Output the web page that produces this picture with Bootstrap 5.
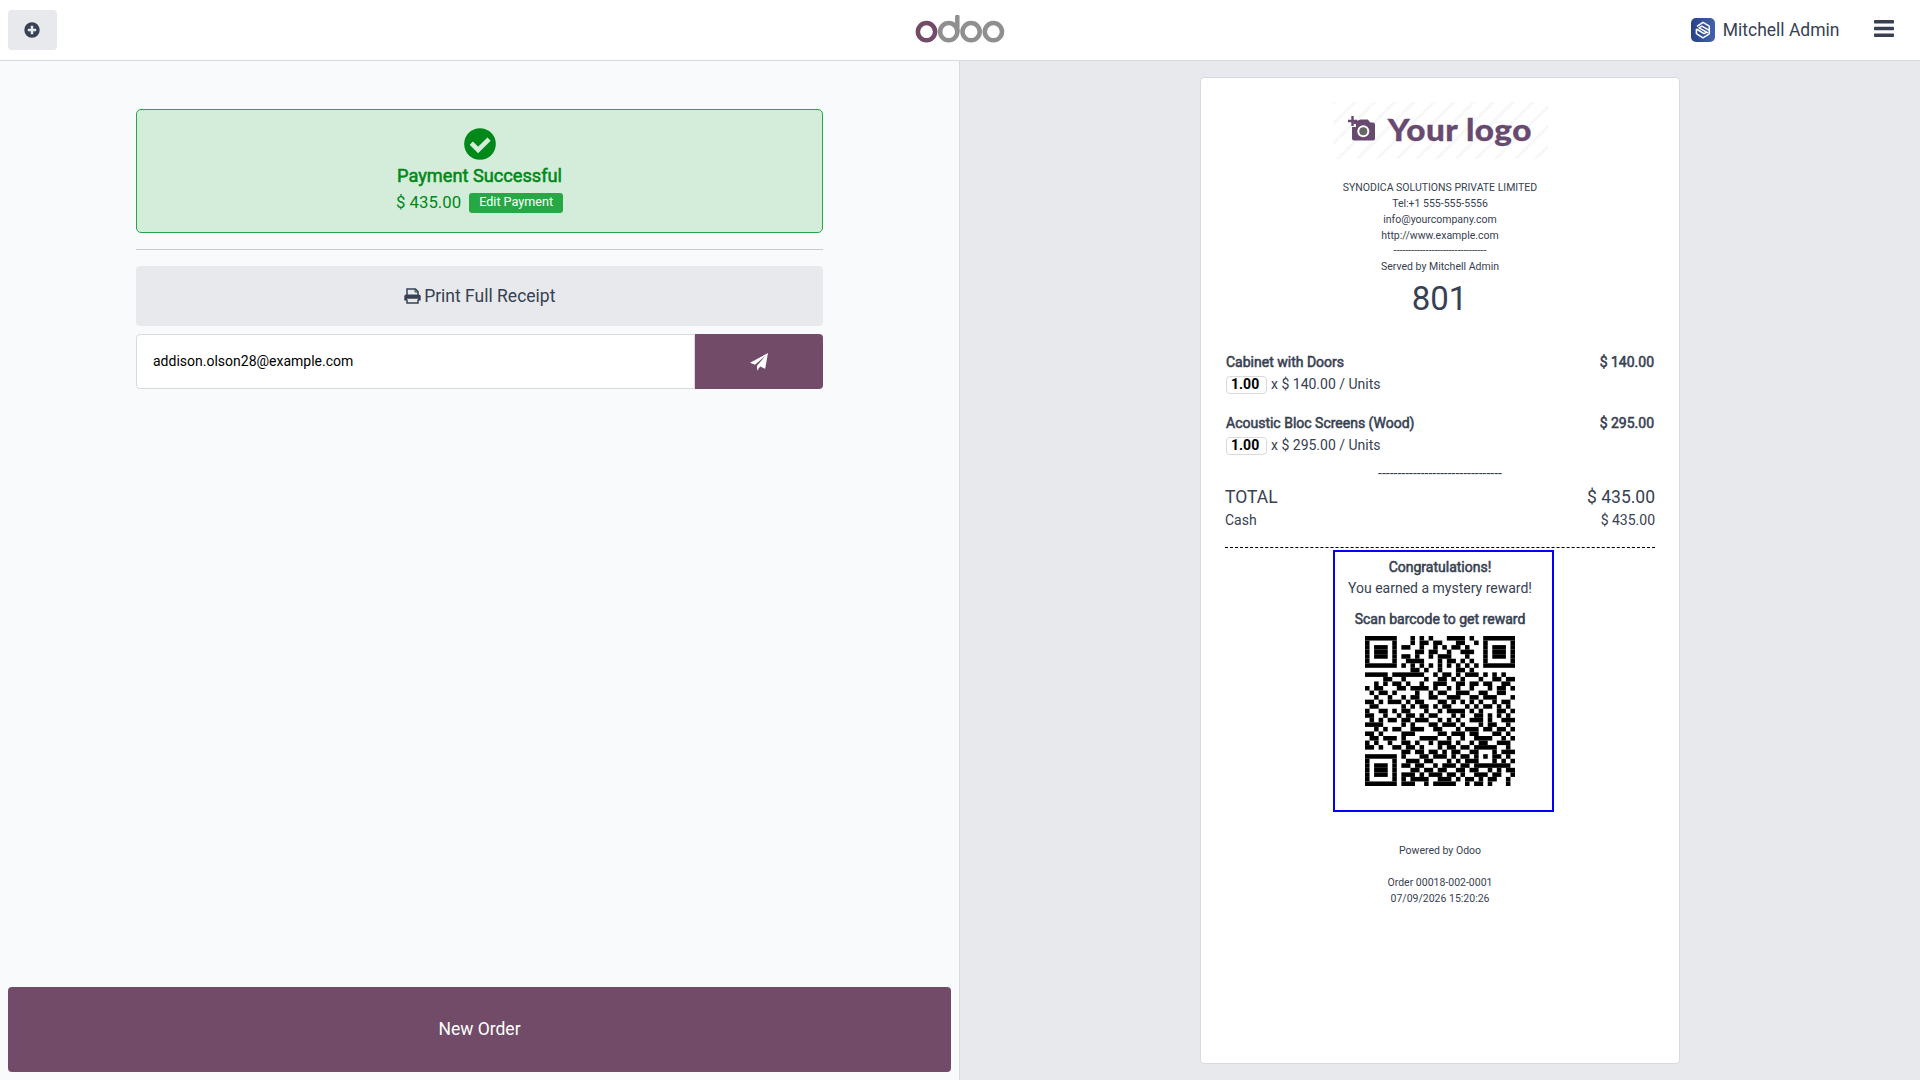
<!DOCTYPE html>
<html lang="en">
<head>
<meta charset="utf-8">
<title>Point of Sale</title>
<link href="https://cdn.jsdelivr.net/npm/bootstrap@5.3.0/dist/css/bootstrap.min.css" rel="stylesheet">
<style>
html,body{height:100%}
body{font-family:Roboto,"Noto Sans",sans-serif;font-size:14px;line-height:21px;color:#374151;background:#f9fafc;overflow:hidden}
.pos-top{height:61px;border-bottom:1px solid #d8dadd;padding:0 20px 0 8px}
.top-side{flex:1 1 0}
.btn-plus{width:49px;height:40px;background:#e7e9ed;border-radius:4px;border:0;padding:0 1px 0 0;line-height:0;display:block}
.brand-logo{margin-left:12px}
.user-name{font-size:17.5px;line-height:26px;margin-left:7.5px}
.burger{margin:0 6px 3px 34.5px}
.left-pane{width:960px;border-right:1px solid #d8dadd;padding:48px 8px 8px}
.actions{width:687px}
.paid-box{height:124px;border:1px solid #28a745;border-radius:5px;background:#d4edda;color:#008818;padding-top:18px}
.paid-title{font-size:18.2px;line-height:27px;margin-top:2px;height:27px}
.paid-sum{font-size:16.8px;line-height:26px;margin-top:1px}
.paid-sum span{line-height:24px;margin-bottom:2px}
.edit-pay{font-size:12.6px;line-height:16px;height:20px;padding:0 10px 2px;border-radius:3px;background:#28a745;color:#fff;border:0}
.split-line{height:1px;background:#c7cacf;margin:16px 0}
.btn-print{height:60px;background:#e7e9ed;border:0;border-radius:4px;font-size:17.5px;color:#374151}
.print-icon{margin-right:3.5px}
.mail-row{height:55px;margin-top:8px}
.mail-row .form-control{font-size:14px;color:#000;border:1px solid #d8dadd;border-radius:4px 0 0 4px;padding:0 16px}
.plum{background:#714b67;border:0;color:#fff}
.btn-send{width:128px;border-radius:0 4px 4px 0}
.btn-new{height:85px;border-radius:4px;font-size:17.5px}
.right-pane{background:#e7e9ed;padding:16px 0 16px}
.receipt{width:480px;height:987px;background:#fff;border:1px solid #d8dadd;border-radius:4px;padding:24px 24px 0}
.receipt-logo{margin-left:108px}
.tiny{font-size:10.5px;line-height:16px}
.company{margin-top:21px}
.company .rule{line-height:14px;margin-bottom:1px}
.heavy{-webkit-text-stroke:.55px currentColor}
.order-no{font-size:33px;line-height:40px;margin-top:4px;padding-right:1px}
.items{margin-top:33px}
.item{height:61px;padding:0 1px}
.qty{width:41px;height:18px;border:1px solid #d8dadd;border-radius:4px;color:#000;line-height:15px;padding-left:4px;margin-right:4px}
.qty-line{line-height:17px;margin-top:3px}
.dashes{margin-top:-11px}
.total{font-size:17.5px;line-height:26px}
.cut{border-top:1px dashed #000;margin-top:16px}
.reward{width:221px;height:262px;border:2px solid #00f;margin:2px 0 0 108px;padding:5px 7px 0 0}
.scan{margin-top:10px}
.qr{margin:6px 0 0 30px}
.foot{margin-top:31px}
</style>
</head>
<body>
<div class="d-flex flex-column vh-100">
<header class="pos-top d-flex align-items-center bg-white">
  <div class="top-side"><button class="btn-plus" aria-label="New"><svg width="16" height="16" viewBox="0 0 16 16"><circle cx="8" cy="8" r="7.7" fill="#374151"/><path d="M8 3.8v8.4M3.8 8h8.4" stroke="#e7e9ed" stroke-width="2.5"/></svg></button></div>
  <svg class="brand-logo" width="90" height="30" viewBox="0 .5 90 30" fill="none" stroke-width="4.5"><g stroke="#8f8f8f"><circle cx="33.7" cy="17.2" r="8.6"/><circle cx="56.1" cy="17.2" r="8.6"/><circle cx="78.4" cy="17.2" r="8.6"/><path d="M42.3 2.3V17" stroke-linecap="round"/></g><circle cx="11.5" cy="17.2" r="8.6" stroke="#714b67"/></svg>
  <div class="top-side d-flex justify-content-end align-items-center">
    <svg width="24" height="24" viewBox="0 0 24 24"><defs><linearGradient id="sg"><stop stop-color="#28418c"/><stop offset="1" stop-color="#4163ad"/></linearGradient></defs><rect width="24" height="24" rx="5" fill="url(#sg)"/><path d="M6 8.3 12 4.3l6.3 3.9v4.2L10.8 8.2 8 9.9l9 4.9M5.4 11v4.6l6.6 4.2 6.3-4v-3.4M5.4 11l7.6 4.6 2.8-1.5" fill="none" stroke="#fff" stroke-width="1.5" stroke-linejoin="round"/></svg>
    <span class="user-name">Mitchell Admin</span>
    <svg class="burger" width="20" height="17" viewBox="0 0 20 17" fill="#374151"><rect width="20" height="3.4" rx=".7"/><rect y="6.8" width="20" height="3.4" rx=".7"/><rect y="13.6" width="20" height="3.4" rx=".7"/></svg>
  </div>
</header>
<main class="d-flex flex-grow-1">
  <section class="left-pane d-flex flex-column justify-content-between align-items-center">
    <div class="actions">
      <div class="paid-box text-center">
        <svg class="d-block mx-auto" width="32" height="32" viewBox="0 0 32 32"><circle cx="16" cy="16" r="15.8" fill="#008818"/><path d="m7.3 15.2 6.8 6.8 11-10.9" fill="none" stroke="#d4edda" stroke-width="4.6" stroke-linejoin="miter"/></svg>
        <div class="paid-title heavy">Payment Successful</div>
        <div class="d-flex justify-content-center align-items-center paid-sum"><span class="me-2">$ 435.00</span><button class="edit-pay">Edit Payment</button></div>
      </div>
      <div class="split-line"></div>
      <button class="btn-print w-100 d-flex align-items-center justify-content-center"><svg width="17" height="16" viewBox="0 0 17 16" class="print-icon"><path d="M3 7V1h8.4L14 3.6V7M3 11.5V15h11v-3.5" fill="none" stroke="#374151" stroke-width="1.5"/><path d="M11 1v3h3" fill="none" stroke="#374151"/><path d="M2.3 6.5h12.4c1.3 0 2 .8 2 2v4H14v-1.7H3v1.7H.3v-4c0-1.2.8-2 2-2z" fill="#374151"/></svg>Print Full Receipt</button>
      <div class="mail-row d-flex">
        <input class="form-control" value="addison.olson28@example.com">
        <button class="plum btn-send flex-shrink-0" aria-label="Send"><svg width="18" height="18" viewBox="0 0 18 18" fill="#fff"><path d="M18 0 15.2 15.8 10.2 13.6 7 17.8V12.7L15.5 2.7 5 11.7 0 9.8z"/></svg></button>
      </div>
    </div>
    <button class="plum btn-new w-100">New Order</button>
  </section>
  <section class="right-pane flex-grow-1 d-flex justify-content-center">
    <article class="receipt">
      <svg class="receipt-logo d-block" width="215" height="57" viewBox="0 0 215 57">
        <defs><pattern id="diag" width="14" height="14" patternUnits="userSpaceOnUse" patternTransform="rotate(45)"><rect width="2.8" height="14" fill="#f7f7f8"/></pattern></defs>
        <rect width="215" height="57" fill="url(#diag)"/>
        <path d="M21 18.5h4l2.3-1h7.5l2.5 3H40q2 0 2 2v14q0 2-2 2H21q-2 0-2-2V25h4v-3h-3z" fill="#684a70"/><path d="M19.5 14v10M15 19h9" stroke="#684a70" stroke-width="2.4"/>
        <circle cx="30.3" cy="29.3" r="6" fill="#fff"/><circle cx="30.3" cy="29.3" r="4" fill="#666"/>
        <text x="54.8" y="39" font-family="Lato" font-weight="900" font-size="30" fill="#684a70" stroke="#684a70" stroke-width=".3" textLength="144" lengthAdjust="spacingAndGlyphs" letter-spacing=".4">Your logo</text>
      </svg>
      <div class="tiny text-center company">
        <div>SYNODICA SOLUTIONS PRIVATE LIMITED</div><div>Tel:+1 555-555-5556</div><div>info@yourcompany.com</div><div>http://www.example.com</div><div class="rule">--------------------------------</div><div>Served by Mitchell Admin</div>
      </div>
      <div class="order-no text-center">801</div>
      <div class="items">
        <div class="item"><div class="d-flex justify-content-between heavy"><span>Cabinet with Doors</span><span>$ 140.00</span></div><div class="d-flex qty-line"><span class="qty fw-bold">1.00</span>x $ 140.00 / Units</div></div>
        <div class="item"><div class="d-flex justify-content-between heavy"><span>Acoustic Bloc Screens (Wood)</span><span>$ 295.00</span></div><div class="d-flex qty-line"><span class="qty fw-bold">1.00</span>x $ 295.00 / Units</div></div>
      </div>
      <div class="text-center dashes">--------------------------------</div>
      <div class="d-flex justify-content-between total"><span>TOTAL</span><span>$ 435.00</span></div>
      <div class="d-flex justify-content-between"><span>Cash</span><span>$ 435.00</span></div>
      <div class="cut"></div>
      <div class="reward text-center">
        <div class="heavy">Congratulations!</div><div>You earned a mystery reward!</div>
        <div class="heavy scan">Scan barcode to get reward</div>
        <svg id="qr" width="150" height="150" viewBox="0 0 33 33" class="qr d-block"></svg>
      </div>
      <div class="tiny text-center foot"><div>Powered by Odoo</div><div class="mt-3">Order 00018-002-0001</div><div>07/09/2026 15:20:26</div></div>
    </article>
  </section>
</main>
</div>
<script>
// 33 x 33 modules, one string per row; the data area is illustrative and does not decode
const rows=[
"111111100010101000111101001111111",
"100000100010110110001100101000001",
"101110101100100101011010001011101",
"101110100001101100100111001011101",
"101110101101001011100010001011101",
"100000100111100010110101001000001",
"111111101010101010101010101111111",
"000000000011010010001101000000000",
"111110111111100101101011101010100",
"000011001000010011010100010011011",
"001010110100100111001101101100110",
"101100011011110100101001000101101",
"010110100001001011001110011001100",
"001001001011001100111001101110001",
"110101110101100011010101010010110",
"011000001010110101100010101101010",
"100110101100010010111101010001101",
"110010010110101100010100110101010",
"010101101101110010101001110100111",
"111100001010001101110100010110010",
"001010110011100110001011101101101",
"110100001110000011011101100011010",
"011011101000111100100100111100101",
"101001001101001011101001011001110",
"110100110110100010110110111110010",
"000000001101101101011001100010111",
"111111101000110111010110101011010",
"100000100111011000101011100010101",
"101110101101100101110110111111110",
"101110100011011011001101100101011",
"101110101110101110110100111011001",
"100000101011110011101011010110010",
"111111101110010111110010110100010"];
let s="";
rows.forEach((r,y)=>{for(const m of r.matchAll(/1+/g))s+=`<rect x="${m.index}" y="${y}" width="${m[0].length}" height="1"/>`});
document.getElementById("qr").innerHTML=s;
</script>
<script src="https://cdn.jsdelivr.net/npm/bootstrap@5.3.0/dist/js/bootstrap.bundle.min.js"></script>
</body>
</html>
